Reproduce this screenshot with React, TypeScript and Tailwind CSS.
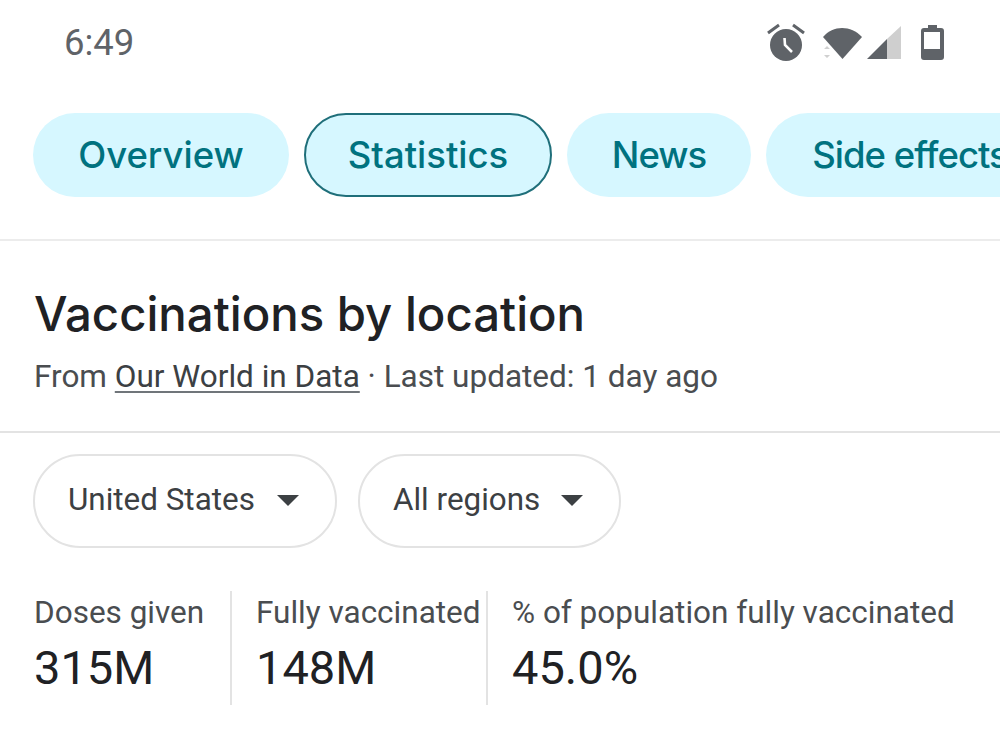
const display = { fontFamily: 'Inter, sans-serif' };

const AlarmIcon = () => (
    <svg width="40" height="40" viewBox="0 0 40 40" fill="#5f6368">
        <circle cx="20" cy="22" r="16" />
        <path d="M2 10 L13 2 M38 10 L27 2" stroke="#5f6368" strokeWidth="3" fill="none" />
        <path d="M18.5 15 L19 22 L26 29" stroke="#fff" strokeWidth="2.6" fill="none" />
    </svg>
);

const WifiIcon = () => (
    <svg width="42" height="34" viewBox="0 0 42 34">
        <path d="M2 11 C12 -1 30 -1 41 11 L21.5 33 Z" fill="#5f6368" />
        <path d="M3 23 L6 20 L9 23 Z M3 29 L9 29 L6 32 Z" fill="#d0d0d0" />
    </svg>
);

const SignalIcon = () => (
    <svg width="36" height="36" viewBox="0 0 36 36">
        <path d="M35 1 L35 34 L21 34 L21 14 Z" fill="#cfcfcf" />
        <path d="M21 14 L21 34 L1 34 Z" fill="#5f6368" />
    </svg>
);

const BatteryIcon = () => (
    <svg width="26" height="38" viewBox="0 0 26 38" fill="#5f6368">
        <path fillRule="evenodd" d="M8 1 H17 V4 H21 Q24 4 24 7 V33 Q24 36 21 36 H4 Q1 36 1 33 V7 Q1 4 4 4 H8 Z M4 8 V25 H20 V8 Z" />
    </svg>
);

const chips = [
    { label: 'Overview', width: 'w-[256px]', text: '', active: false },
    { label: 'Statistics', width: 'w-[248px]', text: '', active: true },
    { label: 'News', width: 'w-[184px]', text: 'tracking-[-1px]', active: false },
    { label: 'Side effects', width: 'w-[288px]', text: 'tracking-[-1px]', active: false },
];

const stats = [
    { label: 'Doses given', value: '315M', width: 'w-[198px]', divider: true },
    { label: 'Fully vaccinated', value: '148M', width: 'w-[256px]', divider: true },
    { label: '% of population fully vaccinated', value: '45.0%', width: 'flex-1', divider: false },
];

const Dropdown = ({ label, width }: { label: string; width: string }) => (
    <div className={`${width} h-[94px] shrink-0 rounded-[47px] border-2 border-[#e3e3e3] flex items-center justify-between pl-[33px] pr-[36px]`}>
        <span className="text-[31.4px] text-[#3c4043] -mt-[2px]">{label}</span>
        <span className="w-0 h-0 border-x-[11.5px] border-x-transparent border-t-[11px] border-t-[#3c4043] -mt-[2px]"></span>
    </div>
);

export default function App() {
    return (
        <div className="w-[1000px] h-[753px] overflow-hidden bg-white font-['Roboto',sans-serif]">
            <div className="h-[113px] flex items-start justify-between pl-[64px] pr-[54px] pt-[21px]">
                <span className="text-[36.5px] leading-[42px] mt-[1px] text-[#5f6368]">6:49</span>
                <div className="flex items-center h-[44px]">
                    <AlarmIcon />
                    <div className="ml-[15px]"><WifiIcon /></div>
                    <div className="ml-[3px]"><SignalIcon /></div>
                    <div className="ml-[18px]"><BatteryIcon /></div>
                </div>
            </div>

            <div className="flex gap-[15px] pl-[33px] h-[128px] border-b-2 border-[#ececec] overflow-hidden">
                {chips.map(chip => (
                    <div
                        key={chip.label}
                        style={display}
                        className={`${chip.width} ${chip.text} h-[84px] shrink-0 rounded-[42px] bg-[#d6f7ff] flex items-center justify-center text-[36.5px] font-medium text-[#00727f] whitespace-nowrap ${chip.active ? 'border-2 border-[#1f6f7a]' : ''}`}
                    >
                        {chip.label}
                    </div>
                ))}
            </div>

            <div className="h-[192px] pl-[34px] pt-[43px] border-b-2 border-[#e3e3e3]">
                <h1 style={display} className="text-[47.3px] leading-[60px] text-[#202124] font-medium">Vaccinations by location</h1>
                <p className="mt-[13px] text-[31.5px] leading-[40px] text-[#4a4d50]">
                    From <span className="text-[#3c4043] underline decoration-2 decoration-[#70757a] underline-offset-4">Our World in Data</span> · Last updated: 1 day ago
                </p>
            </div>

            <div className="flex gap-[21px] pl-[33px] pt-[21px]">
                <Dropdown label="United States" width="w-[304px]" />
                <Dropdown label="All regions" width="w-[263px]" />
            </div>

            <div className="flex pl-[34px] mt-[43px]">
                {stats.map(stat => (
                    <div key={stat.label} className={`${stat.width} h-[114px] ${stat.divider ? 'border-r-2 border-[#e3e3e3]' : ''} ${stat.label === 'Doses given' ? '' : 'pl-[24px]'}`}>
                        <div className="text-[31.5px] leading-[44px] text-[#4a4d50] whitespace-nowrap">{stat.label}</div>
                        <div className="text-[47px] leading-[56px] mt-[5px] text-[#202124]">{stat.value}</div>
                    </div>
                ))}
            </div>
        </div>
    );
}
